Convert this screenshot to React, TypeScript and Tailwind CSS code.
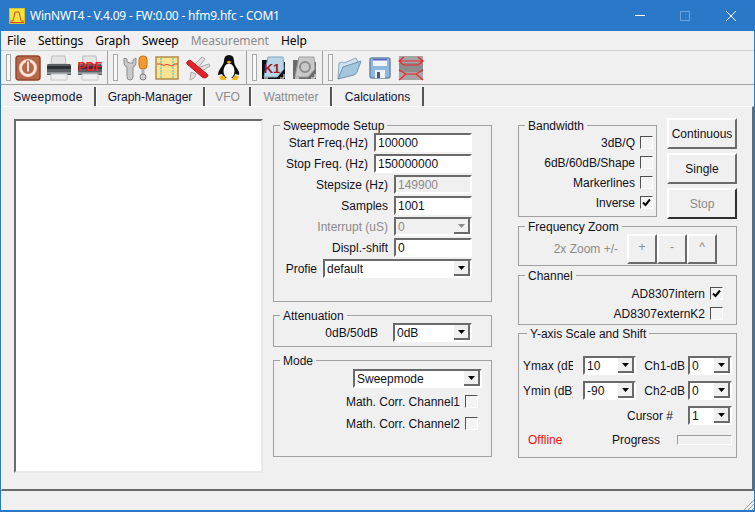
import type { ReactNode } from "react";

const ui = "font-['Liberation_Sans',Arial,sans-serif]";

function Handle({ className = "mr-[5px]" }: { className?: string }) {
  return <div className={`ml-[5px] h-[27px] w-[5px] shrink-0 border border-[#a8a8a8] bg-[#f7f7f7] ${className}`} />;
}

function ToolSep() {
  return <div className="-ml-[1px] h-[33px] w-[1px] shrink-0 bg-[#a0a0a0]" />;
}

function PowerIcon() {
  return (
    <svg viewBox="0 0 26 26" className="h-[26px] w-[26px]">
      <rect x="1" y="1" width="24" height="24" rx="3" fill="#b8674a" stroke="#94452c" strokeWidth="1.5" />
      <circle cx="13" cy="13" r="7.5" fill="none" stroke="#f6e6da" strokeWidth="3" />
      <rect x="11.5" y="6" width="3" height="11" fill="#f6e6da" stroke="#b8674a" />
    </svg>
  );
}

function PrinterIcon({ pdf }: { pdf?: boolean }) {
  return (
    <svg viewBox="0 0 26 26" className="h-[26px] w-[26px]">
      <path d="M6 1h13l1 8H5z" fill="#e4e4e4" stroke="#bdbdbd" />
      <path d="M2 9h22q1 0 1 2v9H1v-9q0-2 1-2z" fill="#5a5f63" />
      <rect x="1" y="11" width="24" height="3" fill="#2d3033" />
      <rect x="1" y="17" width="24" height="2" fill="#8b8f92" />
      <path d="M5 19h16v6H5z" fill="#efefef" stroke="#c6c6c6" />
      {pdf && (
        <text x="13" y="16" textAnchor="middle" fontSize="12" textLength="25" lengthAdjust="spacingAndGlyphs" fontWeight="700" fill="#ee1c25" fontFamily="Liberation Sans, sans-serif">
          PDF
        </text>
      )}
    </svg>
  );
}

function ToolsIcon() {
  return (
    <svg viewBox="0 0 26 26" className="h-[26px] w-[26px]">
      <path d="M1 3v5q0 3 3 4v10q0 3 3 3t3-3V12q3-1 3-4V3l-3 2v3H7L4 7V4z" fill="#c9c9c9" stroke="#8d8d8d" />
      <rect x="16" y="1" width="8" height="13" rx="3.500" fill="#f29a2e" stroke="#c87418" />
      <rect x="18.500" y="14" width="3" height="6" fill="#b0b0b0" />
      <circle cx="20" cy="22" r="3" fill="#d0d0d0" stroke="#808080" />
    </svg>
  );
}

function CalibIcon() {
  return (
    <svg viewBox="0 0 26 26" className="h-[26px] w-[26px]">
      <rect x="2" y="2" width="22" height="22" fill="#fde38f" stroke="#b48a45" strokeWidth="1.500" />
      <path d="M7 3v20M19 3v20" stroke="#25c5dc" strokeDasharray="2 1" />
      <path d="M3 9h4q2 2 4 1t4 0 3 1 2-2h4" fill="none" stroke="#e53a2e" />
    </svg>
  );
}

function KnifeIcon() {
  return (
    <svg viewBox="0 0 26 26" className="h-[26px] w-[26px]">
      <path d="M9 10 17 2l3 2-7 9zM15 12l9-3 1 2-8 5zM6 17l-1 8 4-2 2-4z" fill="#e0e0e0" stroke="#a8a8a8" />
      <path d="M2 9q-1-2 1-3l2-1 17 14q2 2 0 3l-2 1q-2 0-3-1z" fill="#e2222a" stroke="#b21d22" />
    </svg>
  );
}

function TuxIcon() {
  return (
    <svg viewBox="0 0 26 26" className="h-[26px] w-[26px]">
      <path d="M13 0q5 0 5 6 0 3 2 6 4 5 3 8l-4-1-1 4H8l-2-4-4 1q0-4 4-9 2-3 2-5 0-6 5-6z" fill="#0c0c0c" />
      <ellipse cx="13" cy="16" rx="5.500" ry="7.500" fill="#fafafa" />
      <path d="M10.500 7 13 5.500 15.500 7 13 9z" fill="#f0b418" />
      <path d="M3 22q4-3 6 0l1 3H5zM16 25l1-3q3-3 6 0l-2 3z" fill="#f0b418" />
    </svg>
  );
}

function FolderK({ gray }: { gray?: boolean }) {
  return (
    <svg viewBox="0 0 26 26" className="h-[26px] w-[26px]">
      <path d="M1 5h8l2 2h13v17H1z" fill={gray ? "#6a6a6a" : "#101010"} />
      <path d="M7 2h15l1 12-7 8H3z" fill={gray ? "#c9c9c9" : "#b9d6e8"} stroke={gray ? "#9c9c9c" : "#7ea6c0"} />
      {gray ? (
        <circle cx="13" cy="12" r="5" fill="none" stroke="#8d8d8d" strokeWidth="2" />
      ) : (
        <text x="11" y="18" textAnchor="middle" fontSize="13" fontWeight="700" fill="#9c1c20" fontFamily="Liberation Sans, sans-serif">
          K1
        </text>
      )}
      <path d="M19 23h4v-4M3 23h4" fill="none" stroke="#fff" />
    </svg>
  );
}

function OpenFolderIcon() {
  return (
    <svg viewBox="0 0 26 26" className="h-[26px] w-[26px]">
      <path d="M2 24 3 8l3-1 2 1 12-5 2 4v4z" fill="#cfe2ee" stroke="#8aa6bc" />
      <path d="M2 24 7 12l18-6-4 11q-1 2-3 3z" fill="#a3c6de" stroke="#6f93ad" />
    </svg>
  );
}

function FloppyIcon() {
  return (
    <svg viewBox="0 0 26 26" className="h-[26px] w-[26px]">
      <rect x="3" y="3" width="20" height="20" rx="2" fill="#8eb8dc" stroke="#6d86a8" strokeWidth="1.500" />
      <rect x="6" y="4" width="14" height="7" fill="#f2f4f8" />
      <rect x="6" y="4" width="14" height="1.500" fill="#5a62c8" />
      <rect x="8" y="15" width="10" height="8" fill="#eef2f6" />
      <rect x="10" y="17" width="3" height="6" fill="#555c66" />
    </svg>
  );
}

function RedIcon() {
  return (
    <svg viewBox="0 0 26 26" className="h-[26px] w-[26px]">
      <rect x="1" y="1" width="24" height="24" fill="#a5a5a5" />
      <rect x="1" y="8" width="24" height="9" fill="#8c8c8c" />
      <path d="M6 2 1 6l5 4M20 2l5 4-5 4M1 6h24M1 15l7 4-7 6M25 15l-7 4 7 6M8 19h10M5 10h16" fill="none" stroke="#f2232b" strokeWidth="1.200" />
    </svg>
  );
}

function Tool({ children }: { children: ReactNode }) {
  return <div className="mr-[5px] flex h-[26px] w-[26px] shrink-0 items-center justify-center">{children}</div>;
}

function Tab({ label, className, disabled }: { label: string; className: string; disabled?: boolean }) {
  return (
    <div
      className={`flex h-[20px] items-center justify-center border-r-2 border-l border-r-[#555] border-l-white pb-[1px] text-[12px] ${
        disabled ? "text-[#8a8a8a]" : "text-[#101030]"
      } ${className}`}
    >
      {label}
    </div>
  );
}

function Group({ title, className, titleClass = "left-[6px]", children }: { title: string; className: string; titleClass?: string; children: ReactNode }) {
  return (
    <div className={`relative border border-[#a0a0a0] ${className}`}>
      <span className={`absolute -top-[7px] bg-[#f0f0f0] px-[3px] text-[12px] leading-[14px] ${titleClass}`}>{title}</span>
      {children}
    </div>
  );
}

const sunken = "border-2 border-t-[#6a6a6a] border-l-[#6a6a6a] border-r-white border-b-white";

function TextBox({ value, className, disabled }: { value: string; className: string; disabled?: boolean }) {
  return (
    <div
      className={`flex h-[19px] items-center ${sunken} pl-[2px] text-[12px] ${
        disabled ? "bg-[#f0f0f0] text-[#8a8a8a]" : "bg-white"
      } ${className}`}
    >
      {value}
    </div>
  );
}

function Select({ value, className, disabled }: { value: string; className: string; disabled?: boolean }) {
  return (
    <div
      className={`flex h-[19px] items-center justify-between ${sunken} pl-[2px] text-[12px] ${
        disabled ? "bg-[#f0f0f0] text-[#8a8a8a]" : "bg-white"
      } ${className}`}
    >
      {value}
      <div className="flex h-[15px] w-[16px] items-center justify-center border-r-2 border-b-2 border-r-[#6a6a6a] border-b-[#6a6a6a] bg-[#f0f0f0]">
        <svg viewBox="0 0 7 4" className="h-[4px] w-[7px]">
          <path d="M0 0h7L3.500 4z" fill={disabled ? "#8a8a8a" : "#000"} />
        </svg>
      </div>
    </div>
  );
}

function Check({ checked }: { checked?: boolean }) {
  return (
    <div className="flex h-[13px] w-[13px] shrink-0 items-center justify-center border border-t-[#505050] border-l-[#505050] border-r-white border-b-white bg-[#f4f4f4]">
      {checked && (
        <svg viewBox="0 0 9 9" className="h-[9px] w-[9px]">
          <path d="M1 4.500 3.500 7 8 1.500" fill="none" stroke="#000" strokeWidth="2" />
        </svg>
      )}
    </div>
  );
}

function FieldRow({ label, disabled, children }: { label: string; disabled?: boolean; children: ReactNode }) {
  return (
    <div className="flex h-[19px] items-center justify-end gap-[6px]">
      <span className={`text-[12px] ${disabled ? "text-[#8a8a8a]" : ""}`}>{label}</span>
      {children}
    </div>
  );
}

function CheckRow({ label, checked, className = "" }: { label: string; checked?: boolean; className?: string }) {
  return (
    <div className={`flex h-[13px] items-center justify-end gap-[5px] ${className}`}>
      <span className="text-[12px]">{label}</span>
      <Check checked={checked} />
    </div>
  );
}

function RunButton({ label, disabled }: { label: string; disabled?: boolean }) {
  return (
    <div
      className={`flex h-[31px] w-[70px] items-center justify-center border-2 border-t-white border-l-white border-r-[#6a6a6a] border-b-[#6a6a6a] text-[12px] ${
        disabled ? "border-r-[#303030] border-b-[#303030] text-[#8a8a8a]" : ""
      }`}
    >
      {label}
    </div>
  );
}

function ZoomButton({ label }: { label: string }) {
  return (
    <div className="flex h-[30px] w-[30px] items-center justify-center border-2 border-t-white border-l-white border-r-[#6a6a6a] border-b-[#6a6a6a] pb-[4px] text-[12px] text-[#8a8a8a]">
      {label}
    </div>
  );
}

function ClipLabel({ text }: { text: string }) {
  return <span className="w-[50px] overflow-hidden whitespace-nowrap text-[12px]">{text}</span>;
}

function ChLabel({ text }: { text: string }) {
  return (
    <div className="mr-[3px] flex w-[41px] justify-end justify-self-end overflow-hidden whitespace-nowrap text-[12px]">
      <span className="shrink-0">{text}</span>
    </div>
  );
}

export default function App() {
  return (
    <div className={`${ui} flex h-[512px] w-[755px] flex-col overflow-hidden border-x border-b-2 border-[#2a78c8] bg-[#f0f0f0] text-[#101020]`}>
      {/* title bar */}
      <div className="flex h-[31px] shrink-0 items-center bg-[#2a78c8] font-['Noto_Sans',sans-serif] text-white">
        <svg viewBox="0 0 16 16" className="ml-[8px] h-[16px] w-[16px]">
          <rect width="16" height="16" fill="#f4e33c" stroke="#b9a52a" />
          <path d="M1 13h3l2-9h4l2 9h3" fill="none" stroke="#d8482a" />
          <path d="M1 14.500h14" stroke="#d8482a" />
        </svg>
        <span className="ml-[5px] text-[12px] tracking-[-0.2px]">WinNWT4 - V.4.09 - FW:0.00 - hfm9.hfc - COM1</span>
        <div className="ml-auto flex items-center">
          <div className="mr-[35px] h-[1px] w-[10px] bg-white" />
          <div className="mr-[36px] h-[10px] w-[10px] border border-[#6ba4de]" />
          <svg viewBox="0 0 10 10" className="mr-[18px] h-[10px] w-[10px]">
            <path d="M0 0l10 10M10 0 0 10" stroke="#fff" />
          </svg>
        </div>
      </div>

      {/* menu */}
      <div className="flex h-[20px] shrink-0 items-center gap-[12px] border-b border-[#d0d0d0] pl-[6px] font-['Noto_Sans',sans-serif] text-[12px] tracking-[-0.05px] text-black">
        <span>File</span>
        <span>Settings</span>
        <span>Graph</span>
        <span>Sweep</span>
        <span className="text-[#8a8a8a]">Measurement</span>
        <span>Help</span>
      </div>

      {/* toolbar */}
      <div className="flex h-[34px] shrink-0 items-center border-b border-[#a0a0a0]">
        <Handle className="mr-[4px]" />
        <Tool><PowerIcon /></Tool>
        <Tool><PrinterIcon /></Tool>
        <Tool><PrinterIcon pdf /></Tool>
        <ToolSep />
        <Handle />
        <Tool><ToolsIcon /></Tool>
        <Tool><CalibIcon /></Tool>
        <Tool><KnifeIcon /></Tool>
        <Tool><TuxIcon /></Tool>
        <ToolSep />
        <Handle className="mr-[4px]" />
        <Tool><FolderK /></Tool>
        <Tool><FolderK gray /></Tool>
        <ToolSep />
        <Handle className="mr-[3px]" />
        <Tool><OpenFolderIcon /></Tool>
        <Tool><FloppyIcon /></Tool>
        <Tool><RedIcon /></Tool>
      </div>

      {/* tabs */}
      <div className="mt-[2px] flex h-[19px] shrink-0 items-start">
        <Tab label="Sweepmode" className="w-[95px] tracking-[0.3px]" />
        <Tab label="Graph-Manager" className="w-[109px]" />
        <Tab label="VFO" className="w-[46px]" disabled />
        <Tab label="Wattmeter" className="w-[81px]" disabled />
        <Tab label="Calculations" className="w-[92px]" />
      </div>

      {/* tab page */}
      <div className="flex h-[385px] shrink-0 border-t border-r-2 border-b-2 border-l border-t-white border-l-white border-r-[#6a6a6a] border-b-[#6a6a6a] pl-[12px]">
        <div className="mt-[12px] h-[354px] w-[249px] shrink-0 border-2 border-t-[#6a6a6a] border-l-[#6a6a6a] border-r-[#e8e8e8] border-b-[#e8e8e8] bg-white" />

        <div className="ml-[10px] mt-[18px] flex w-[219px] shrink-0 flex-col">
          <Group title="Sweepmode Setup" className="h-[177px] pt-[7px] pr-[19px]">
            <div className="flex flex-col gap-[2px]">
              <FieldRow label="Start Freq.(Hz)"><TextBox value="100000" className="w-[98px]" /></FieldRow>
              <FieldRow label="Stop Freq. (Hz)"><TextBox value="150000000" className="w-[98px]" /></FieldRow>
              <FieldRow label="Stepsize (Hz)"><TextBox value="149900" className="w-[78px]" disabled /></FieldRow>
              <FieldRow label="Samples"><TextBox value="1001" className="w-[78px]" /></FieldRow>
              <FieldRow label="Interrupt (uS)" disabled><Select value="0" className="w-[78px]" disabled /></FieldRow>
              <FieldRow label="Displ.-shift"><TextBox value="0" className="w-[78px]" /></FieldRow>
              <FieldRow label="Profie"><Select value="default" className="w-[149px]" /></FieldRow>
            </div>
          </Group>
          <Group title="Attenuation" className="mt-[13px] h-[32px] pt-[7px] pr-[19px]">
            <div className="flex items-center justify-end gap-[15px]">
              <span className="text-[12px]">0dB/50dB</span>
              <Select value="0dB" className="w-[79px]" />
            </div>
          </Group>
          <Group title="Mode" className="mt-[13px] h-[97px] pt-[8px] pr-[9px]">
            <div className="flex justify-end"><Select value="Sweepmode" className="w-[129px]" /></div>
            <CheckRow label="Math. Corr. Channel1" className="mt-[7px] pr-[4px]" />
            <CheckRow label="Math. Corr. Channel2" className="mt-[9px] pr-[4px]" />
          </Group>
        </div>

        <div className="ml-[26px] flex w-[219px] shrink-0 flex-col">
          <div className="mt-[11px] flex items-start justify-between">
            <Group title="Bandwidth" className="mt-[7px] h-[92px] w-[139px] pt-[10px] pr-[3px]">
              <CheckRow label="3dB/Q" />
              <CheckRow label="6dB/60dB/Shape" className="mt-[7px]" />
              <CheckRow label="Markerlines" className="mt-[7px]" />
              <CheckRow label="Inverse" checked className="mt-[7px]" />
            </Group>
            <div className="flex flex-col gap-[4px]">
              <RunButton label="Continuous" />
              <RunButton label="Single" />
              <RunButton label="Stop" disabled />
            </div>
          </div>
          <Group title="Frequency Zoom" className="mt-[7px] h-[40px] w-[219px]">
            <div className="flex items-center justify-end pt-[7px] pr-[19px]">
              <span className="mr-[9px] text-[12px] text-[#8a8a8a]">2x Zoom +/-</span>
              <ZoomButton label="+" />
              <ZoomButton label="-" />
              <ZoomButton label="^" />
            </div>
          </Group>
          <Group title="Channel" className="mt-[9px] h-[50px] w-[219px] pt-[11px] pr-[13px]">
            <CheckRow label="AD8307intern" checked />
            <CheckRow label="AD8307externK2" className="mt-[7px]" />
          </Group>
          <Group title="Y-axis Scale and Shift" titleClass="left-[8px]" className="mt-[8px] h-[125px] w-[219px] pt-[22px] pr-[4px] pl-[4px]">
            <div className="grid grid-cols-[60px_53px_1fr_44px] items-center gap-y-[6px]">
              <ClipLabel text="Ymax (dB)" />
              <Select value="10" className="w-[53px]" />
              <ChLabel text="Ch1-dB" />
              <Select value="0" className="w-[44px]" />
              <ClipLabel text="Ymin (dB)" />
              <Select value="-90" className="w-[53px]" />
              <ChLabel text="Ch2-dB" />
              <Select value="0" className="w-[44px]" />
              <span className="col-span-3 justify-self-end pr-[15px] text-[12px]">Cursor #</span>
              <Select value="1" className="w-[44px]" />
            </div>
            <div className="mt-[6px] flex items-center">
              <span className="ml-[5px] w-[84px] text-[12px] text-[#f01010]">Offline</span>
              <span className="text-[12px]">Progress</span>
              <div className="ml-[17px] h-[10px] w-[55px] border border-t-[#9a9a9a] border-l-[#9a9a9a] border-r-white border-b-white" />
            </div>
          </Group>
        </div>
      </div>

      {/* status bar */}
      <div className="flex flex-1 items-end justify-end">
        <svg viewBox="0 0 12 12" className="h-[12px] w-[12px]">
          <path d="M12 2 2 12M12 6l-6 6M12 10l-2 2" stroke="#a0a0a0" />
        </svg>
      </div>
    </div>
  );
}
